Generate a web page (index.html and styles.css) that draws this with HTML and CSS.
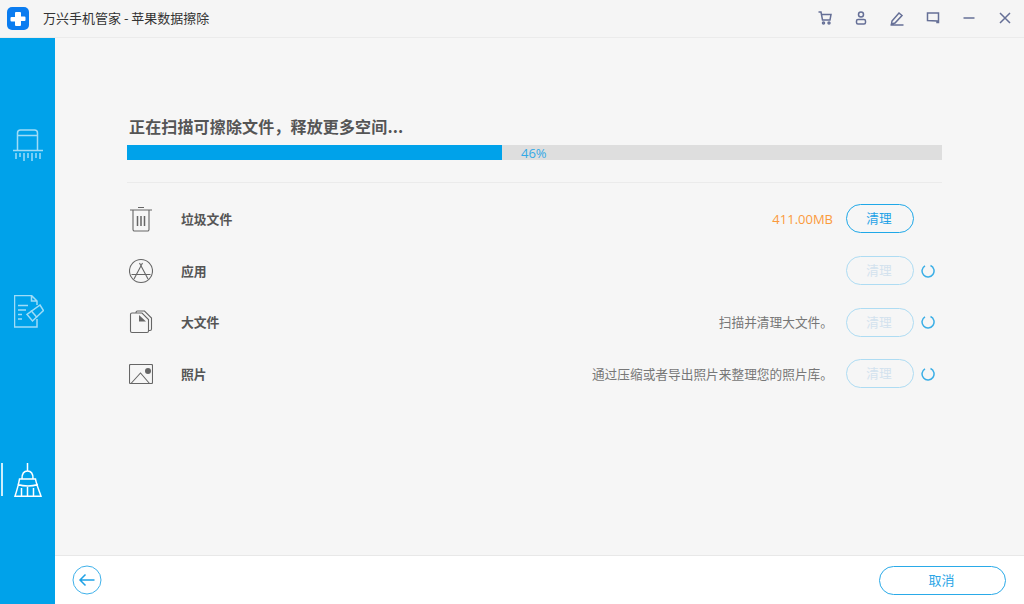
FILE: index.html
```html
<!DOCTYPE html>
<html lang="zh-CN">
<head>
<meta charset="utf-8">
<title>万兴手机管家 - 苹果数据擦除</title>
<link rel="stylesheet" href="styles.css">
</head>
<body>
<div class="app">
  <header class="titlebar">
    <svg class="logo" width="22" height="23" viewBox="0 0 22 23"><rect width="22" height="23" rx="5" fill="#0a7cf0"/><path d="M9 5h4a1 1 0 0 1 1 1v3.500h3.500a1 1 0 0 1 1 1v2.500a1 1 0 0 1-1 1H14V18a1 1 0 0 1-1 1H9a1 1 0 0 1-1-1v-3.500H4.500a1 1 0 0 1-1-1v-2.500a1 1 0 0 1 1-1H8V6a1 1 0 0 1 1-1z" fill="#fff"/></svg>
    <span class="app-title">万兴手机管家 - 苹果数据擦除</span>
    <div class="win-tools">
      <svg class="tool" width="16" height="16" viewBox="0 0 16 16"><path d="M1.500 2H4l1.500 8h7.500l1-5.500H4.500" /><circle cx="6.500" cy="13" r="1"/><circle cx="12" cy="13" r="1"/></svg>
      <svg class="tool" width="16" height="16" viewBox="0 0 16 16"><circle cx="8" cy="4.500" r="2.500"/><rect x="3.500" y="9.500" width="9" height="4.500" rx="1.500"/></svg>
      <svg class="tool" width="16" height="16" viewBox="0 0 16 16"><path d="M3 11l7-8 3 2.500-7 7.500-3.500 1zM1.500 15h13"/></svg>
      <svg class="tool" width="16" height="16" viewBox="0 0 16 16"><path d="M2.500 3h11v9.500h-1.500v-1.500L2.500 10.500z"/></svg>
      <svg class="tool" width="16" height="16" viewBox="0 0 16 16"><path d="M2.500 8h11"/></svg>
      <svg class="tool" width="16" height="16" viewBox="0 0 16 16"><path d="M3 3l10 10M13 3L3 13"/></svg>
    </div>
  </header>
  <div class="body">
    <nav class="sidebar">
      <div class="nav-item">
        <svg class="nav-icon dim" width="32" height="36" viewBox="0 0 32 36"><path d="M5.500 22V5a3 3 0 0 1 3-3h14a3 3 0 0 1 3 3v17M5.500 7.500h20M1 22.500h30M4 25v6M8 25v4M12 25v8M16 25v5M20 25v8M24 25v5M28 25v6"/></svg>
      </div>
      <div class="nav-item">
        <svg class="nav-icon dim doc-icon" width="30" height="33" viewBox="0 0 30 33"><path d="M23 10V6L17.500 0.500H0.500V32H23V24M17.500 0.500V6H23M4 10.500h10M4 15h8M4 19.500h4M4 24h4"/><path d="M26 10L29.500 15.500 18.500 26 13 19.500z"/><path d="M17 15.500l6 7"/></svg>
      </div>
      <div class="nav-item">
        <span class="active-mark"></span>
        <svg class="nav-icon" width="28" height="34" viewBox="0 0 28 34"><path d="M13.500 0v8M8 15.500C8 11 10 8 13.500 8s5.500 3 5.500 7.500M5.500 16h16C22.500 22 25 27 27 33.250H1C3 27 4.500 22 5.500 16zM3.500 21.500c7 2 14 2 20.500 0M7.500 33v-8M13.500 33v-9M19.500 33v-8"/></svg>
      </div>
    </nav>
    <div class="main">
      <section class="content">
        <h1 class="scan-title">正在扫描可擦除文件，释放更多空间...</h1>
        <div class="progress">
          <div class="progress-fill" style="width:46%"></div>
          <span class="progress-text">46%</span>
        </div>
        <div class="rows">
          <div class="row">
            <svg class="row-icon" width="24" height="26" viewBox="0 0 24 26"><path d="M1 4h22M9 1.500h6M4 4v19.500a1.500 1.500 0 0 0 1.500 1.500h13a1.500 1.500 0 0 0 1.500-1.500V4"/><path class="bars" d="M8.500 10v10M12 10v10M15.500 10v10"/></svg>
            <span class="row-label">垃圾文件</span>
            <span class="row-size">411.00MB</span>
            <button class="btn">清理</button>
            <span class="row-slot"></span>
          </div>
          <div class="row">
            <svg class="row-icon" width="24" height="26" viewBox="0 0 24 26"><circle cx="12" cy="13" r="11.500"/><path d="M13.500 5L5 21M10.500 5L19 21M2.500 16.500h19"/></svg>
            <span class="row-label">应用</span>
            <span class="row-desc"></span>
            <button class="btn btn-off">清理</button>
            <span class="row-slot"><svg class="spin" width="14" height="14" viewBox="0 0 14 14"><path d="M9.500 1.500A6 6 0 1 1 4 1.800"/></svg></span>
          </div>
          <div class="row">
            <svg class="row-icon" width="24" height="24" viewBox="0 0 24 24"><path d="M13 3H3a1.500 1.500 0 0 0-1.500 1.500V21A1.500 1.500 0 0 0 3 22.500h15a1.500 1.500 0 0 0 1.500-1.500V9.500zM7 3v-0.500A1.500 1.500 0 0 1 8.500 1h7l7 7v11a1.500 1.500 0 0 1-1.500 1.500h-1.500"/><path class="solid" d="M10 5l7 6.500h-7z"/></svg>
            <span class="row-label">大文件</span>
            <span class="row-desc">扫描并清理大文件。</span>
            <button class="btn btn-off">清理</button>
            <span class="row-slot"><svg class="spin" width="14" height="14" viewBox="0 0 14 14"><path d="M9.500 1.500A6 6 0 1 1 4 1.800"/></svg></span>
          </div>
          <div class="row">
            <svg class="row-icon" width="24" height="20" viewBox="0 0 24 20"><rect x="0.500" y="0.500" width="23" height="19" rx="1"/><path d="M2 19.500L11.500 9l9 10.500"/><circle class="solid" cx="19" cy="7" r="3"/></svg>
            <span class="row-label">照片</span>
            <span class="row-desc">通过压缩或者导出照片来整理您的照片库。</span>
            <button class="btn btn-off">清理</button>
            <span class="row-slot"><svg class="spin" width="14" height="14" viewBox="0 0 14 14"><path d="M9.500 1.500A6 6 0 1 1 4 1.800"/></svg></span>
          </div>
        </div>
      </section>
      <footer class="footer">
        <svg class="back" width="30" height="30" viewBox="0 0 30 30"><circle cx="15" cy="15" r="14"/><path class="arrow" d="M22.500 15H8M13.500 9.500L8 15l5.500 5.500"/></svg>
        <button class="btn-cancel">取消</button>
      </footer>
    </div>
  </div>
</div>
</body>
</html>
```
FILE: styles.css
```css
* { box-sizing: border-box; }
html, body { margin: 0; padding: 0; height: 100%; }
body {
  font-family: "Noto Sans CJK SC", "Open Sans", sans-serif;
  font-size: 13px;
  color: #555;
  background: #f5f5f5;
  overflow: hidden;
}
.app { display: flex; flex-direction: column; height: 604px; }
.titlebar {
  display: flex;
  align-items: center;
  flex: 0 0 38px;
  padding: 0 11px 1px 7px;
  background: #f5f5f5;
  border-bottom: 1px solid #ebebeb;
}
.logo { flex: none; }
.app-title { margin-left: 14px; font-size: 13px; line-height: 18px; color: #333; }
.win-tools { margin-left: auto; display: flex; gap: 20px; }
.tool { fill: none; stroke: #656f96; stroke-width: 1.500; }
.body { display: flex; flex: 1; min-height: 0; }
.sidebar {
  flex: 0 0 55px;
  display: flex;
  flex-direction: column;
  padding-top: 24px;
  background: #00a2ea;
}
.nav-item {
  position: relative;
  flex: 0 0 167px;
  display: flex;
  align-items: center;
  justify-content: center;
}
.nav-icon { fill: none; stroke: #fff; stroke-width: 1.500; }
.nav-icon.dim { stroke: #9fdcf7; }
.doc-icon { margin: 0 0 3px 2px; }
.active-mark {
  position: absolute;
  left: 1px;
  top: 67px;
  width: 2px;
  height: 33px;
  background: #cdeefb;
}
.main { flex: 1; display: flex; flex-direction: column; min-width: 0; }
.content { flex: 1; padding: 78px 82px 0 72px; background: #f6f6f6; }
.scan-title {
  margin: 0 0 0 2px;
  font-size: 16px;
  line-height: 20px;
  font-weight: 700;
  letter-spacing: 0.15px;
  color: #555;
}
.progress {
  position: relative;
  height: 15px;
  margin-top: 9px;
  background: #dedede;
}
.progress-fill { height: 100%; background: #00a2ea; }
.progress-text {
  position: absolute;
  left: 394px;
  top: 0;
  font-size: 13px;
  line-height: 17px;
  font-family: "Open Sans", sans-serif;
  color: #33a9e6;
}
.rows { margin-top: 22px; padding-top: 10px; border-top: 1px solid #ebebeb; }
.row { display: flex; align-items: center; height: 51.7px; }
.row-icon { flex: none; margin: 0 28px 0 2px; fill: none; stroke: #666; stroke-width: 1.100; }
.row-icon .solid { fill: #666; stroke: none; }
.row-icon .bars { stroke-width: 1.500; }
.row-label { flex: 1; font-weight: 700; font-size: 12.8px; line-height: 18px; color: #555; }
.row-size { margin-right: 13px; font-family: "Open Sans", sans-serif; font-size: 13px; line-height: 18px; color: #fb9a3c; }
.row-desc { margin-right: 13px; font-size: 12.7px; line-height: 18px; color: #777; }
.btn {
  flex: none;
  width: 68px;
  height: 29px;
  padding: 0 2px 2px 0;
  border: 1px solid #1fa8e8;
  border-radius: 15px;
  background: transparent;
  font: inherit;
  font-size: 12.7px;
  color: #1fa2e6;
}
.btn-off { border-color: #aedcf3; color: #d3e2ee; }
.row-slot { flex: 0 0 28px; display: flex; padding-left: 7px; }
.spin { fill: none; stroke: #3aaee6; stroke-width: 1.500; }
.footer {
  flex: 0 0 49px;
  display: flex;
  align-items: center;
  justify-content: space-between;
  padding: 0 18px 0 17px;
  background: #fff;
  border-top: 1px solid #e8e8e8;
}
.back { fill: none; stroke: #3fb1ea; stroke-width: 1; }
.back .arrow { stroke: #1fa2e6; stroke-width: 1.500; }
.btn-cancel {
  width: 127px;
  height: 29px;
  padding: 0 2px 2px 0;
  border: 1px solid #2aaae8;
  border-radius: 15px;
  background: #fff;
  font: inherit;
  font-size: 13px;
  color: #2aa5e6;
}
```
